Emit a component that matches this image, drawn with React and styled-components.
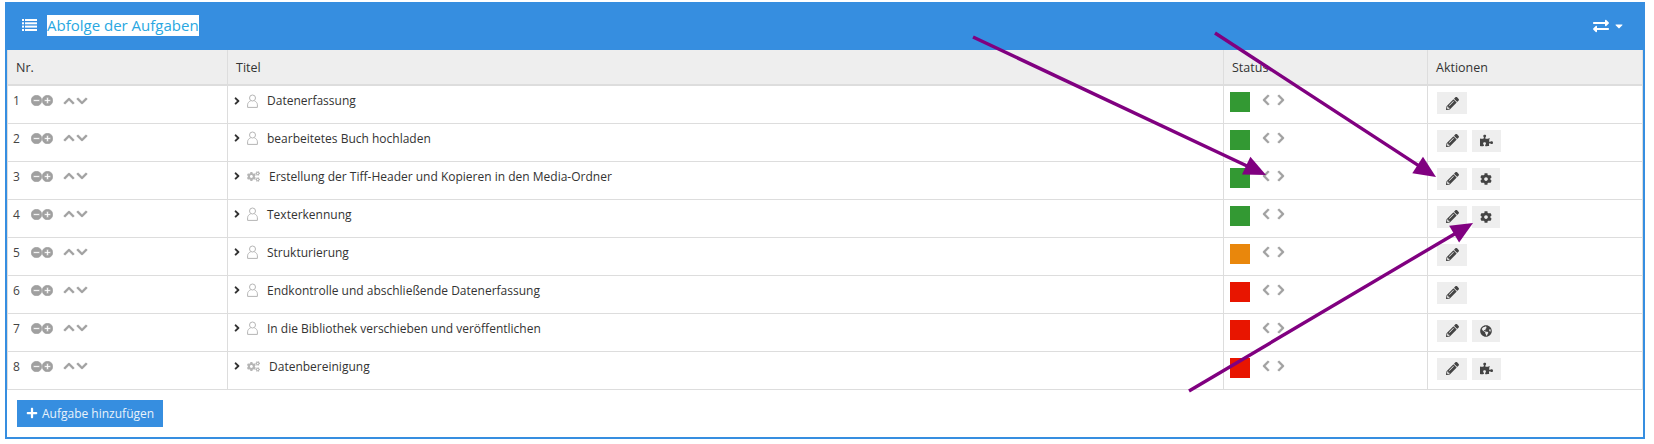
import React from "react";
import styled, { createGlobalStyle } from "styled-components";
import {
  FaMinusCircle,
  FaPlusCircle,
  FaChevronUp,
  FaChevronDown,
  FaChevronLeft,
  FaChevronRight,
  FaPencilAlt,
  FaCog,
  FaCogs,
  FaPuzzlePiece,
  FaGlobeAmericas,
  FaPlus,
  FaCaretDown,
  FaExchangeAlt,
  FaAngleRight,
} from "react-icons/fa";

const tasks = [
  { title: "Datenerfassung", kind: "user", color: "#339933", extra: null },
  { title: "bearbeitetes Buch hochladen", kind: "user", color: "#339933", extra: "puzzle" },
  { title: "Erstellung der Tiff-Header und Kopieren in den Media-Ordner", kind: "auto", color: "#339933", extra: "cog" },
  { title: "Texterkennung", kind: "user", color: "#339933", extra: "cog" },
  { title: "Strukturierung", kind: "user", color: "#e9870c", extra: null },
  { title: "Endkontrolle und abschließende Datenerfassung", kind: "user", color: "#e81500", extra: null },
  { title: "In die Bibliothek verschieben und veröffentlichen", kind: "user", color: "#e81500", extra: "globe" },
  { title: "Datenbereinigung", kind: "auto", color: "#e81500", extra: "puzzle" },
];

const extraIcons = { puzzle: FaPuzzlePiece, cog: FaCog, globe: FaGlobeAmericas };

const GlobalStyle = createGlobalStyle`
  html, body {
    margin: 0;
    background: #fff;
  }
  body {
    font-family: "Open Sans", "Liberation Sans", sans-serif;
    font-size: 12px;
    color: #333;
  }
`;

const Page = styled.div`
  position: relative;
  width: 1654px;
  height: 444px;
  padding: 2px 9px 0 5px;
  box-sizing: border-box;
  overflow: hidden;
`;

const Panel = styled.section`
  border: 2px solid #368ee0;
  border-top: 0;
  height: 437px;
  box-sizing: border-box;
`;

const PanelHeader = styled.header`
  display: flex;
  align-items: center;
  justify-content: space-between;
  height: 48px;
  margin: 0 -2px;
  padding: 0 20px 0 17px;
  background: #368ee0;
  color: #fff;
`;

const PanelTitle = styled.h2`
  display: flex;
  align-items: center;
  gap: 10px;
  margin: 0 0 2px;
  font-size: 15px;
  font-weight: 400;
`;

const Selected = styled.span`
  background: #fff;
  color: #29a7e1;
  line-height: 21px;
`;

const HeaderTools = styled.div`
  display: flex;
  align-items: center;
  gap: 4px;
  font-size: 16px;
`;

const Table = styled.table`
  width: 1636px;
  border-collapse: collapse;
  table-layout: fixed;
  border-right: 1px solid #ddd;
`;

const Th = styled.th`
  height: 34px;
  padding: 0 8px;
  background: #eee;
  border-left: 1px solid #ddd;
  border-bottom: 2px solid #ddd;
  font-size: 12.5px;
  font-weight: 400;
  text-align: left;
  color: #333;
`;

const Td = styled.td`
  height: 38px;
  padding: 6px 0 0 ${(p) => p.$inset}px;
  border-left: 1px solid #ddd;
  border-bottom: 1px solid #ddd;
  box-sizing: border-box;
  vertical-align: top;
`;

const CellRow = styled.div`
  display: flex;
  align-items: center;
  height: 17px;
`;

const Num = styled.span`
  width: 18px;
  color: #444;
`;

const Gray = styled.span`
  display: inline-flex;
  color: #a0a0a0;
  font-size: ${(p) => p.$size || 11}px;
  margin-right: ${(p) => p.$gap || 0}px;

  svg {
    stroke: currentColor;
    stroke-width: 24px;
  }
`;

const Toggle = styled.span`
  display: inline-flex;
  color: #333;
  font-size: 12px;
  margin: 0 4px 0 1px;
`;

const KindIcon = styled.span`
  display: inline-flex;
  width: ${(p) => (p.$auto ? 22 : 20)}px;
  color: #b5b5b5;
`;

const TitleText = styled.span`
  color: #333;
`;

const Square = styled.span`
  display: block;
  flex: none;
  width: 20px;
  height: 20px;
  margin-right: 10px;
  background: ${(p) => p.$color};
`;

const StatusCell = styled.div`
  display: flex;
  align-items: flex-start;
`;

const Arrows = styled.div`
  display: flex;
  gap: 3px;
  padding-top: 2px;
`;

const ActionRow = styled.div`
  display: flex;
  gap: 5px;
`;

const ActionButton = styled.button`
  display: flex;
  align-items: center;
  justify-content: center;
  width: ${(p) => p.$width || 30}px;
  height: 22px;
  padding: 0;
  border: 0;
  background: #eee;
  color: #444;
  font-size: ${(p) => p.$iconSize || 13}px;
`;

const Footer = styled.div`
  padding: 10px 10px;
`;

const AddButton = styled.button`
  display: flex;
  align-items: center;
  gap: 4px;
  height: 27px;
  padding: 0 9px;
  border: 0;
  background: #368ee0;
  color: #e8f2fb;
  font-family: inherit;
  font-size: 12px;
`;

const Overlay = styled.svg`
  position: absolute;
  left: 0;
  top: 0;
  pointer-events: none;
`;

function ListGlyph() {
  return (
    <svg width="15" height="12" viewBox="0 0 15 12" fill="#fff">
      <rect x="0" y="0" width="2" height="2" />
      <rect x="3" y="0" width="12" height="2" />
      <rect x="0" y="3.3" width="2" height="2" />
      <rect x="3" y="3.3" width="12" height="2" />
      <rect x="0" y="6.6" width="2" height="2" />
      <rect x="3" y="6.6" width="12" height="2" />
      <rect x="0" y="10" width="2" height="2" />
      <rect x="3" y="10" width="12" height="2" />
    </svg>
  );
}

function UserGlyph() {
  return (
    <svg width="11" height="14" viewBox="0 0 11 14" fill="none" stroke="currentColor" strokeWidth="1">
      <circle cx="5.5" cy="4" r="3" />
      <path d="M3.5 7C1.8 7.6.6 9 .6 10.8v2.6h9.8v-2.6C10.4 9 9.2 7.6 7.5 7" />
    </svg>
  );
}

function Arrow({ x1, y1, x2, y2 }) {
  const angle = Math.atan2(y2 - y1, x2 - x1);
  const len = 24;
  const spread = 0.42;
  const ax = x2 - len * Math.cos(angle - spread);
  const ay = y2 - len * Math.sin(angle - spread);
  const bx = x2 - len * Math.cos(angle + spread);
  const by = y2 - len * Math.sin(angle + spread);
  const mx = x2 - 18 * Math.cos(angle);
  const my = y2 - 18 * Math.sin(angle);
  return (
    <>
      <line x1={x1} y1={y1} x2={mx} y2={my} stroke="#800080" strokeWidth="3.4" />
      <polygon points={`${x2},${y2} ${ax},${ay} ${bx},${by}`} fill="#800080" />
    </>
  );
}

export default function App() {
  return (
    <Page>
      <GlobalStyle />
      <Panel>
        <PanelHeader>
          <PanelTitle>
            <ListGlyph />
            <Selected>Abfolge der Aufgaben</Selected>
          </PanelTitle>
          <HeaderTools>
            <FaExchangeAlt />
            <FaCaretDown size={12} />
          </HeaderTools>
        </PanelHeader>
        <Table>
          <colgroup>
            <col style={{ width: 220 }} />
            <col style={{ width: 996 }} />
            <col style={{ width: 204 }} />
            <col />
          </colgroup>
          <thead>
            <tr>
              <Th>Nr.</Th>
              <Th>Titel</Th>
              <Th>Status</Th>
              <Th>Aktionen</Th>
            </tr>
          </thead>
          <tbody>
            {tasks.map((task, i) => {
              const Extra = extraIcons[task.extra];
              const isPuzzle = task.extra === "puzzle";
              return (
                <tr key={task.title}>
                  <Td $inset={5}>
                    <CellRow>
                      <Num>{i + 1}</Num>
                      <Gray><FaMinusCircle /></Gray>
                      <Gray $gap={10}><FaPlusCircle /></Gray>
                      <Gray $size={12} $gap={1}><FaChevronUp /></Gray>
                      <Gray $size={12}><FaChevronDown /></Gray>
                    </CellRow>
                  </Td>
                  <Td $inset={2}>
                    <CellRow>
                      <Toggle><FaAngleRight /></Toggle>
                      <KindIcon $auto={task.kind === "auto"}>
                        {task.kind === "auto" ? <FaCogs size={13} /> : <UserGlyph />}
                      </KindIcon>
                      <TitleText>{task.title}</TitleText>
                    </CellRow>
                  </Td>
                  <Td $inset={6}>
                    <StatusCell>
                      <Square $color={task.color} />
                      <Arrows>
                        <Gray $size={12}><FaChevronLeft /></Gray>
                        <Gray $size={12}><FaChevronRight /></Gray>
                      </Arrows>
                    </StatusCell>
                  </Td>
                  <Td $inset={9}>
                    <ActionRow>
                      <ActionButton><FaPencilAlt /></ActionButton>
                      {Extra && (
                        <ActionButton $width={isPuzzle ? 29 : 28} $iconSize={isPuzzle ? 13 : 12}>
                          <Extra />
                        </ActionButton>
                      )}
                    </ActionRow>
                  </Td>
                </tr>
              );
            })}
          </tbody>
        </Table>
        <Footer>
          <AddButton>
            <FaPlus size={12} color="#fff" />
            Aufgabe hinzufügen
          </AddButton>
        </Footer>
      </Panel>
      <Overlay width="1654" height="444">
        <Arrow x1={973} y1={37} x2={1266} y2={175} />
        <Arrow x1={1215} y1={33} x2={1436} y2={177} />
        <Arrow x1={1189} y1={391} x2={1473} y2={223} />
      </Overlay>
    </Page>
  );
}
